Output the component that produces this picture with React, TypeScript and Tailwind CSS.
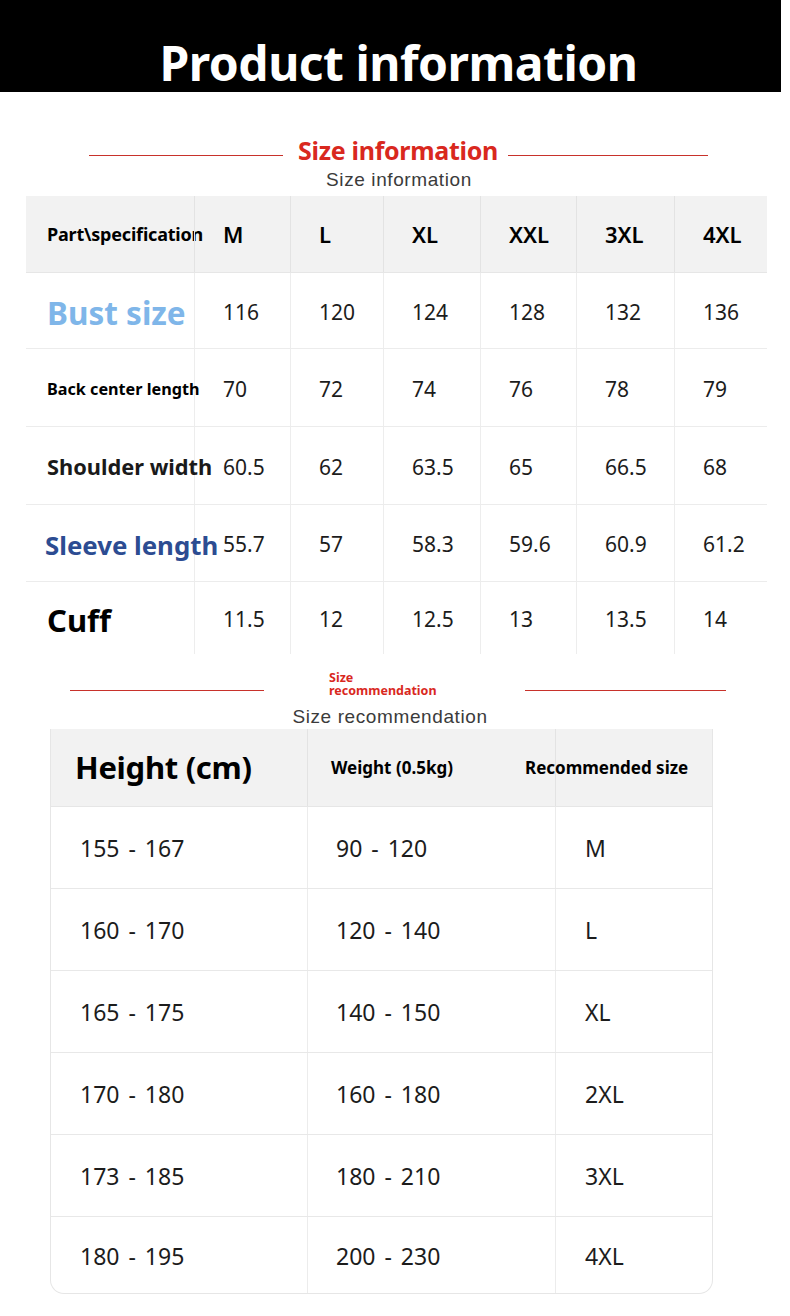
import React from 'react';

const sizes = ['M', 'L', 'XL', 'XXL', '3XL', '4XL'];

// measurement rows for the size information table
const specRows = [
  { label: 'Bust size', cls: 'text-[31.5px] text-[#7fb6e9]', values: ['116', '120', '124', '128', '132', '136'], h: 'h-[76px]' },
  { label: 'Back center length', cls: 'text-[16.2px] text-black', values: ['70', '72', '74', '76', '78', '79'], h: 'h-[78px]' },
  { label: 'Shoulder width', cls: 'text-[21.8px] text-[#1a1a1a]', values: ['60.5', '62', '63.5', '65', '66.5', '68'], h: 'h-[78px]' },
  { label: 'Sleeve length', cls: 'text-[25.8px] text-[#2c4c92] -ml-[2px]', values: ['55.7', '57', '58.3', '59.6', '60.9', '61.2'], h: 'h-[77px]' },
  { label: 'Cuff', cls: 'text-[31px] text-black', values: ['11.5', '12', '12.5', '13', '13.5', '14'], h: 'h-[72px]' },
];

const recRows = [
  ['155 - 167', '90 - 120', 'M'],
  ['160 - 170', '120 - 140', 'L'],
  ['165 - 175', '140 - 150', 'XL'],
  ['170 - 180', '160 - 180', '2XL'],
  ['173 - 185', '180 - 210', '3XL'],
  ['180 - 195', '200 - 230', '4XL'],
];

const cols1 = 'grid grid-cols-[168px_96px_93px_97px_96px_98px_93px]';
const cols2 = 'grid grid-cols-[256px_248px_159px]';

const App = () => {
  return (
    <div className="w-[790px] h-[1316px] bg-white overflow-hidden font-['Noto_Sans',sans-serif]">
      {/* Top banner */}
      <div className="w-[781px] h-[92px] bg-black flex items-end justify-center pl-[16px]">
        <h1 className="text-white font-bold text-[48px] leading-none tracking-[-0.5px] pb-[5px] font-['Noto_Sans',sans-serif]">
          Product information
        </h1>
      </div>

      {/* Size information heading */}
      <div className="flex items-center pl-[89px] pt-[42px] h-[75px]">
        <div className="w-[194px] h-px bg-[#c8322b] mt-[10px]" />
        <div className="ml-[15px] text-[#d9281e] font-bold text-[25px] leading-none tracking-[-0.3px]">Size information</div>
        <div className="ml-[10px] w-[200px] h-px bg-[#c8322b] mt-[10px]" />
      </div>
      <div className="text-center text-[#3b3b3b] text-[19px] leading-none h-[29px] pt-[3px] pl-[8px] tracking-[0.6px] font-['Liberation_Sans',sans-serif]">
        Size information
      </div>

      {/* Size information table */}
      <div className="ml-[26px] w-[741px]">
        <div className={`${cols1} h-[77px] bg-[#f2f2f2] border-b border-[#e6e6e6]`}>
          <div className="flex items-center pl-[21px] text-[18px] font-bold text-black tracking-[-0.2px] whitespace-nowrap">Part\specification</div>
          {sizes.map((s) => (
            <div key={s} className="flex items-center pl-[28px] border-l border-[#e3e3e3] text-[22px] font-semibold text-black">
              {s}
            </div>
          ))}
        </div>
        {specRows.map((row, i) => (
          <div
            key={row.label}
            className={`${cols1} ${row.h} ${i < specRows.length - 1 ? 'border-b border-[#ececec]' : ''}`}
          >
            <div className={`flex items-center pl-[21px] pt-[4px] font-bold whitespace-nowrap ${row.cls}`}>
              <span className="relative z-10">{row.label}</span>
            </div>
            {row.values.map((v, j) => (
              <div key={j} className="flex items-center pl-[28px] pt-[4px] border-l border-[#ededed] text-[21px] text-[#1c1c1c]">
                {v}
              </div>
            ))}
          </div>
        ))}
      </div>

      {/* Size recommendation heading */}
      <div className="flex items-start pl-[70px] pt-[17px] h-[52px]">
        <div className="w-[194px] h-px bg-[#c8322b] mt-[19px]" />
        <div className="w-[261px] pl-[65px]">
          <div className="w-[116px] text-[#d9281e] font-bold text-[12.5px] leading-[13px]">Size recommendation</div>
        </div>
        <div className="w-[201px] h-px bg-[#c8322b] mt-[19px]" />
      </div>
      <div className="text-center text-[#3b3b3b] text-[19px] leading-none h-[23px] pt-[1px] pr-[10px] tracking-[0.6px] font-['Liberation_Sans',sans-serif]">
        Size recommendation
      </div>

      {/* Size recommendation table */}
      <div className="ml-[50px] w-[663px] rounded-b-[14px] border-x border-b border-[#e6e6e6] overflow-hidden">
        <div className={`${cols2} h-[78px] bg-[#f2f2f2] border-b border-[#e6e6e6]`}>
          <div className="flex items-center pl-[24px] text-[31px] font-bold text-black tracking-[-0.3px]">Height (cm)</div>
          <div className="flex items-center pl-[23px] border-l border-[#e3e3e3] text-[17px] font-bold text-black">Weight (0.5kg)</div>
          <div className="flex items-center border-l border-[#e3e3e3] text-[17px] font-bold text-black whitespace-nowrap">
            <span className="-ml-[31px]">Recommended size</span>
          </div>
        </div>
        {recRows.map((row, i) => (
          <div
            key={row[2]}
            className={`${cols2} ${i < recRows.length - 1 ? 'h-[82px] border-b border-[#e8e8e8]' : 'h-[76px]'}`}
          >
            <div className="flex items-center pl-[29px] pt-[2px] text-[23px] text-[#1c1c1c] [word-spacing:3px]">{row[0]}</div>
            <div className="flex items-center pl-[28px] pt-[2px] border-l border-[#ececec] text-[23px] text-[#1c1c1c] [word-spacing:3px]">{row[1]}</div>
            <div className="flex items-center pl-[29px] pt-[2px] border-l border-[#ececec] text-[23px] text-[#1c1c1c]">{row[2]}</div>
          </div>
        ))}
      </div>
    </div>
  );
};

export default App;
